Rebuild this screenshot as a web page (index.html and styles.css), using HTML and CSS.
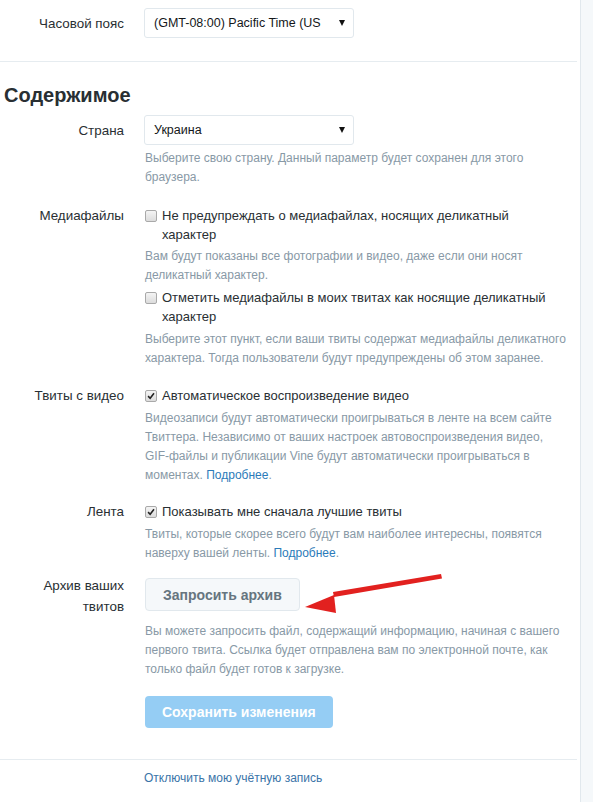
FILE: index.html
```html
<!DOCTYPE html>
<html lang="ru">
<head>
    <meta charset="UTF-8">
    <meta name="viewport" content="width=device-width, initial-scale=1.0">
    <title>Настройки учётной записи</title>
    <link rel="stylesheet" href="styles.css">
</head>
<body>
    <div class="page">
        <div class="panel">
            <div class="row row-tz">
                <div class="label label-select">Часовой пояс</div>
                <div class="control">
                    <div class="select">
                        <span class="select-text">(GMT-08:00) Pacific Time (US</span>
                        <span class="select-arrow"></span>
                    </div>
                </div>
            </div>

            <div class="divider"></div>

            <h2 class="section-title">Содержимое</h2>

            <div class="row row-country">
                <div class="label label-select">Страна</div>
                <div class="control">
                    <div class="select">
                        <span class="select-text">Украина</span>
                        <span class="select-arrow"></span>
                    </div>
                    <p class="help help-after-select">Выберите свою страну. Данный параметр будет сохранен для этого браузера.</p>
                </div>
            </div>

            <div class="row row-media">
                <div class="label">Медиафайлы</div>
                <div class="control">
                    <label class="check">
                        <span class="box"></span>
                        <span class="check-text">Не предупреждать о медиафайлах, носящих деликатный характер</span>
                    </label>
                    <p class="help help-after-check">Вам будут показаны все фотографии и видео, даже если они носят деликатный характер.</p>
                    <label class="check check-second">
                        <span class="box"></span>
                        <span class="check-text">Отметить медиафайлы в моих твитах как носящие деликатный характер</span>
                    </label>
                    <p class="help help-tight">Выберите этот пункт, если ваши твиты содержат медиафайлы деликатного характера. Тогда пользователи будут предупреждены об этом заранее.</p>
                </div>
            </div>

            <div class="row row-video">
                <div class="label">Твиты с видео</div>
                <div class="control">
                    <label class="check">
                        <span class="box checked">
                            <svg viewBox="0 0 12 12" width="12" height="12"><path d="M2.5 6.2 L5 8.7 L9.6 2.8" fill="none" stroke="#222" stroke-width="1.9"/></svg>
                        </span>
                        <span class="check-text">Автоматическое воспроизведение видео</span>
                    </label>
                    <p class="help help-after-select">Видеозаписи будут автоматически проигрываться в ленте на всем сайте Твиттера. Независимо от ваших настроек автовоспроизведения видео, <span class="nowrap">GIF-файлы</span> и публикации Vine будут автоматически проигрываться в моментах. <a href="#" class="link">Подробнее</a>.</p>
                </div>
            </div>

            <div class="row row-feed">
                <div class="label">Лента</div>
                <div class="control">
                    <label class="check">
                        <span class="box checked">
                            <svg viewBox="0 0 12 12" width="12" height="12"><path d="M2.5 6.2 L5 8.7 L9.6 2.8" fill="none" stroke="#222" stroke-width="1.9"/></svg>
                        </span>
                        <span class="check-text">Показывать мне сначала лучшие твиты</span>
                    </label>
                    <p class="help help-after-select">Твиты, которые скорее всего будут вам наиболее интересны, появятся наверху вашей ленты. <a href="#" class="link">Подробнее</a>.</p>
                </div>
            </div>

            <div class="row row-archive">
                <div class="label label-archive">Архив ваших твитов</div>
                <div class="control">
                    <button class="btn-archive">Запросить архив</button>
                    <p class="help help-after-btn">Вы можете запросить файл, содержащий информацию, начиная с вашего первого твита. Ссылка будет отправлена вам по электронной почте, как только файл будет готов к загрузке.</p>
                </div>
            </div>

            <div class="row row-save">
                <div></div>
                <div class="control">
                    <button class="btn-save" disabled>Сохранить изменения</button>
                </div>
            </div>

            <div class="divider divider-bottom"></div>

            <div class="row row-deactivate">
                <div></div>
                <div class="control">
                    <a href="#" class="link link-deactivate">Отключить мою учётную запись</a>
                </div>
            </div>

            <!-- annotation arrow pointing at the archive button -->
            <svg class="note-arrow" width="165" height="40" viewBox="0 0 165 40">
                <path d="M161 0 L162 4.5 L54 23 L53 18 Z" fill="#e2211f"/>
                <polygon points="25,33 54,21 56,39" fill="#e2211f"/>
            </svg>
        </div>
        <div class="sidebar"></div>
    </div>
</body>
</html>
```

FILE: styles.css
```css
* {
    margin: 0;
    padding: 0;
    box-sizing: border-box;
}

body {
    font-family: 'Liberation Sans', Arial, sans-serif;
    color: #292f33;
    background: #fff;
}

.page {
    display: flex;
    min-height: 100vh;
}

.panel {
    position: relative;
    width: 581px;
    border-right: 1px solid #e1e8ed;
    padding-bottom: 20px;
}

.sidebar {
    flex: 1;
    background: #f5f8fa;
}

.row {
    display: grid;
    grid-template-columns: 124px 1fr;
    column-gap: 20px;
    padding-right: 13px;
}

.label {
    text-align: right;
    font-size: 13.4px;
    line-height: 19px;
    color: #292f33;
}

.label-select {
    padding-top: 6px;
}

.label-archive {
    line-height: 21px;
    margin-top: -3px;
}

.control {
    min-width: 0;
}

.select {
    display: flex;
    align-items: center;
    justify-content: space-between;
    width: 210px;
    height: 30px;
    padding: 0 8px 0 9px;
    border: 1px solid #e1e8ed;
    border-radius: 3px;
    background: #fff;
    font-size: 12.5px;
    color: #14171a;
    white-space: nowrap;
}

.select-arrow {
    flex: none;
    width: 0;
    height: 0;
    border-left: 3.5px solid transparent;
    border-right: 3.5px solid transparent;
    border-top: 6px solid #111;
}

.divider {
    height: 1px;
    background: #e6ecf0;
    margin-right: 3px;
}

.section-title {
    font-size: 20px;
    line-height: 24px;
    font-weight: bold;
    color: #292f33;
    margin: 21px 0 0 4px;
}

.help {
    font-size: 12px;
    line-height: 19px;
    color: #8899a6;
    padding-left: 1px;
}

.nowrap {
    white-space: nowrap;
}

.help-after-select {
    margin-top: 4px;
}

.help-after-check {
    margin-top: 3px;
}

.help-tight {
    margin-top: 4px;
}

.help-after-btn {
    margin-top: 11px;
}

.check {
    display: flex;
    align-items: flex-start;
    font-size: 13px;
    line-height: 19px;
    color: #292f33;
    padding-left: 1px;
    padding-right: 6px;
}

.check-second {
    margin-top: 3px;
}

.box {
    flex: none;
    display: flex;
    align-items: center;
    justify-content: center;
    width: 12px;
    height: 12px;
    margin: 4px 5px 0 0;
    border: 1px solid #a9a9a9;
    border-radius: 2px;
    background: linear-gradient(#f4f4f4, #dcdcdc);
}

.check-text {
    min-width: 0;
}

.link {
    color: #2b7bb9;
    text-decoration: none;
}

.row-tz {
    padding-top: 8px;
    padding-bottom: 23px;
}

.row-country {
    margin-top: 8px;
}

.row-media {
    margin-top: 19px;
}

.row-video {
    margin-top: 18px;
}

.row-feed {
    margin-top: 17px;
}

.row-archive {
    margin-top: 15px;
}

.row-save {
    margin-top: 17px;
}

.btn-archive {
    height: 33px;
    padding: 0 17px;
    margin-left: 1px;
    font-family: 'Liberation Sans', Arial, sans-serif;
    font-size: 14px;
    font-weight: bold;
    color: #66757f;
    background: #f5f8fa;
    border: 1px solid #e1e8ed;
    border-radius: 4px;
    cursor: pointer;
}

.btn-save {
    height: 32px;
    padding: 0 17px;
    margin-left: 1px;
    font-family: 'Liberation Sans', Arial, sans-serif;
    font-size: 14px;
    font-weight: bold;
    color: #fff;
    background: #95cdf4;
    border: none;
    border-radius: 4px;
}

.divider-bottom {
    margin-top: 31px;
}

.row-deactivate {
    margin-top: 8px;
}

.link-deactivate {
    font-size: 12px;
    line-height: 19px;
    color: #3a74a8;
}

.note-arrow {
    position: absolute;
    left: 280px;
    top: 574px;
}
```
